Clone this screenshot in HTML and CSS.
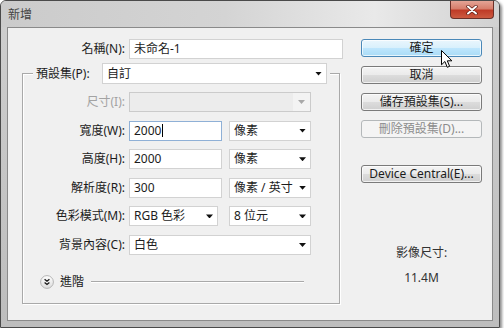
FILE: index.html
```html
<!DOCTYPE html>
<html>
<head>
    <title>新增</title>
    <meta charset="utf-8">
    <link rel="stylesheet" href="styles.css">
</head>
<body>
    <div class="window">
        <div class="titlebar">
            <span class="title">新增</span>
            <div class="close-btn">
                <svg width="12" height="10" viewBox="0 0 12 10">
                    <path d="M2 1.5 L10 8.5 M10 1.5 L2 8.5" stroke="#5a1a12" stroke-width="3.4" stroke-linecap="round"/>
                    <path d="M2 1.5 L10 8.5 M10 1.5 L2 8.5" stroke="#fff" stroke-width="2" stroke-linecap="round"/>
                </svg>
            </div>
        </div>

        <div class="client">
            <div class="form">
                <div class="row name-row">
                    <span class="lbl">名稱(N):</span>
                    <div class="field name-field">未命名-1</div>
                </div>

                <fieldset class="group">
                    <legend class="preset">
                        <span class="preset-lbl">預設集(P):</span>
                        <div class="dropdown preset-dd"><span>自訂</span><i class="arrow"></i></div>
                    </legend>

                    <div class="rows">
                        <div class="row">
                            <span class="lbl disabled">尺寸(I):</span>
                            <div class="dropdown full dd-disabled"><span></span><span class="dd-btn"><i class="arrow"></i></span></div>
                        </div>
                        <div class="row">
                            <span class="lbl">寬度(W):</span>
                            <div class="field num focused">2000<i class="caret"></i></div>
                            <div class="dropdown unit"><span>像素</span><i class="arrow"></i></div>
                        </div>
                        <div class="row">
                            <span class="lbl">高度(H):</span>
                            <div class="field num">2000</div>
                            <div class="dropdown unit"><span>像素</span><i class="arrow"></i></div>
                        </div>
                        <div class="row">
                            <span class="lbl">解析度(R):</span>
                            <div class="field num">300</div>
                            <div class="dropdown unit"><span>像素 / 英寸</span><i class="arrow"></i></div>
                        </div>
                        <div class="row">
                            <span class="lbl">色彩模式(M):</span>
                            <div class="dropdown mode"><span>RGB 色彩</span><i class="arrow"></i></div>
                            <div class="dropdown unit"><span>8 位元</span><i class="arrow"></i></div>
                        </div>
                        <div class="row">
                            <span class="lbl">背景內容(C):</span>
                            <div class="dropdown full"><span>白色</span><i class="arrow"></i></div>
                        </div>
                    </div>

                    <div class="advanced">
                        <span class="adv-btn">
                            <svg width="14" height="14" viewBox="0 0 14 14">
                                <defs>
                                    <linearGradient id="advGrad" x1="0" y1="0" x2="0" y2="1">
                                        <stop offset="0" stop-color="#ffffff"/>
                                        <stop offset="1" stop-color="#dcdcdc"/>
                                    </linearGradient>
                                </defs>
                                <circle cx="7" cy="7" r="6.4" fill="url(#advGrad)" stroke="#b4b4b4"/>
                                <path d="M4.6 4.2 L7 6.2 L9.4 4.2 M4.6 7.4 L7 9.4 L9.4 7.4" fill="none" stroke="#1a1a1a" stroke-width="1.3"/>
                            </svg>
                        </span>
                        <span class="adv-text">進階</span>
                        <span class="adv-line"></span>
                    </div>
                </fieldset>
            </div>

            <div class="side">
                <div class="btn hover">確定</div>
                <div class="btn">取消</div>
                <div class="btn">儲存預設集(S)...</div>
                <div class="btn btn-disabled">刪除預設集(D)...</div>
                <div class="btn device">Device Central(E)...</div>

                <div class="info">
                    <div>影像尺寸:</div>
                    <div class="size">11.4M</div>
                </div>
            </div>
        </div>

        <svg class="cursor" width="12" height="19" viewBox="0 0 12 19">
            <path d="M0.5 0.5 L0.5 14.8 L3.9 11.5 L6.3 17.3 L8.6 16.3 L6.3 10.8 L10.9 10.8 Z" fill="#fff" stroke="#000" stroke-width="1" stroke-linejoin="round"/>
        </svg>
    </div>
</body>
</html>
```

FILE: styles.css
```css
* { box-sizing: border-box; }

body {
    margin: 0;
    background: #ffffff;
    font-family: "Noto Sans", "Noto Sans CJK TC", sans-serif;
    font-size: 12px;
    color: #1c1c1c;
}

.window {
    position: relative;
    width: 500px;
    height: 328px;
    border: 1px solid #4a4a4a;
    border-radius: 6px 6px 0 0;
    background: linear-gradient(#cfcfcf, #bdbdbd);
    padding: 0 6px 6px 6px;
    box-shadow: 2px 2px 3px rgba(0, 0, 0, 0.45);
    display: flex;
    flex-direction: column;
}

.titlebar {
    height: 26px;
    margin: 0 -6px;
    padding-left: 7px;
    display: flex;
    justify-content: space-between;
    background: linear-gradient(to right, #cbcbcb 0%, #d4d4d4 45%, #e9e9e9 75%, #d1d1d1 100%);
    border-radius: 5px 5px 0 0;
}

.title {
    line-height: 26px;
    color: #444;
    font-family: "Noto Sans CJK TC", sans-serif;
}

.close-btn {
    width: 44px;
    height: 18px;
    margin-right: 5px;
    border: 1px solid #6b3029;
    border-top: none;
    border-radius: 0 0 4px 4px;
    background: linear-gradient(#e4a496 0%, #d77e6c 45%, #bf3b27 55%, #cc5a40 100%);
    display: flex;
    justify-content: center;
    align-items: center;
}

.client {
    flex: 1;
    border: 1px solid #8a8a8a;
    background: #f0f0f0;
    padding: 11px 9px 0 14px;
    display: flex;
}

.form {
    width: 322px;
}

.row {
    display: flex;
    align-items: center;
    gap: 4px;
    height: 20px;
}

.row .num + .dropdown {
    margin-left: 3px;
}

.row .mode + .dropdown {
    margin-left: 7px;
}

.lbl {
    width: 102px;
    text-align: right;
    line-height: 20px;
    white-space: nowrap;
}

.name-row .lbl {
    width: 103px;
}

.lbl.disabled {
    color: #a3a3a3;
}

.field {
    height: 20px;
    background: #fff;
    border: 1px solid #d2d2d2;
    padding-left: 4px;
    line-height: 18px;
    display: flex;
    align-items: center;
}

.field.focused {
    border-color: #8fb0d6;
}

.name-field {
    width: 214px;
}

.num {
    width: 93px;
}

.caret {
    display: inline-block;
    width: 1px;
    height: 13px;
    background: #000;
    margin-left: 1px;
}

.dropdown {
    height: 20px;
    background: #fff;
    border: 1px solid #d2d2d2;
    padding: 0 4px 0 4px;
    display: flex;
    justify-content: space-between;
    align-items: center;
    line-height: 18px;
    white-space: nowrap;
}

.arrow {
    display: block;
    width: 7px;
    height: 4px;
    background: #111;
    clip-path: polygon(0 0, 100% 0, 50% 100%);
}

.full {
    width: 182px;
}

.unit {
    width: 82px;
}

.mode {
    width: 89px;
}

.dd-disabled {
    background: #ececec;
    border-color: #cbcbcb;
    padding: 0;
}

.dd-btn {
    width: 17px;
    height: 18px;
    background: #f3f3f3;
    display: flex;
    justify-content: center;
    align-items: center;
}

.dd-disabled .arrow {
    background: #a8a8a8;
}

.group {
    width: 318px;
    margin: 4px 0 0 0;
    padding: 0 0 14px 0;
    border: 1px solid #a9a9a9;
    box-shadow: inset 1px 1px 0 #fff, 1px 1px 0 #fff;
}

.preset {
    margin-left: 10px;
    padding: 0 3px;
    display: flex;
    align-items: center;
    gap: 4px;
    background: #f0f0f0;
}

.preset-lbl {
    width: 62px;
    white-space: nowrap;
    line-height: 21px;
}

.preset-dd {
    width: 225px;
    height: 21px;
}

.rows {
    padding-top: 8px;
    display: flex;
    flex-direction: column;
    gap: 8.6px;
}

.advanced {
    margin-top: 20px;
    margin-left: 17px;
    height: 14px;
    display: flex;
    align-items: center;
    gap: 6px;
}

.adv-btn {
    display: flex;
}

.adv-text {
    line-height: 14px;
    margin-right: 1px;
}

.adv-line {
    width: 213px;
    border-top: 1px solid #a9a9a9;
    border-bottom: 1px solid #fff;
}

.side {
    margin-left: 17px;
    width: 121px;
    display: flex;
    flex-direction: column;
    gap: 9px;
}

.btn {
    height: 18px;
    border: 1px solid #7a7a7a;
    border-radius: 3px;
    background: linear-gradient(#f4f4f4 0%, #ebebeb 48%, #dcdcdc 52%, #cfcfcf 100%);
    box-shadow: inset 0 0 0 1px rgba(255, 255, 255, 0.7);
    text-align: center;
    line-height: 16px;
    white-space: nowrap;
}

.btn.hover {
    border-color: #4a88b8;
    background: linear-gradient(#eaf6fd 0%, #d9f0fc 48%, #bee6fd 52%, #a9dbf6 100%);
}

.btn.btn-disabled {
    border-color: #b4b8ba;
    background: #f4f4f4;
    color: #8c8c8c;
    box-shadow: none;
}

.btn.device {
    margin-top: 18px;
}

.info {
    margin-top: 53px;
    text-align: center;
    line-height: 16px;
    display: flex;
    flex-direction: column;
    gap: 9px;
    color: #333;
}

.cursor {
    position: absolute;
    left: 440px;
    top: 49px;
}
```
